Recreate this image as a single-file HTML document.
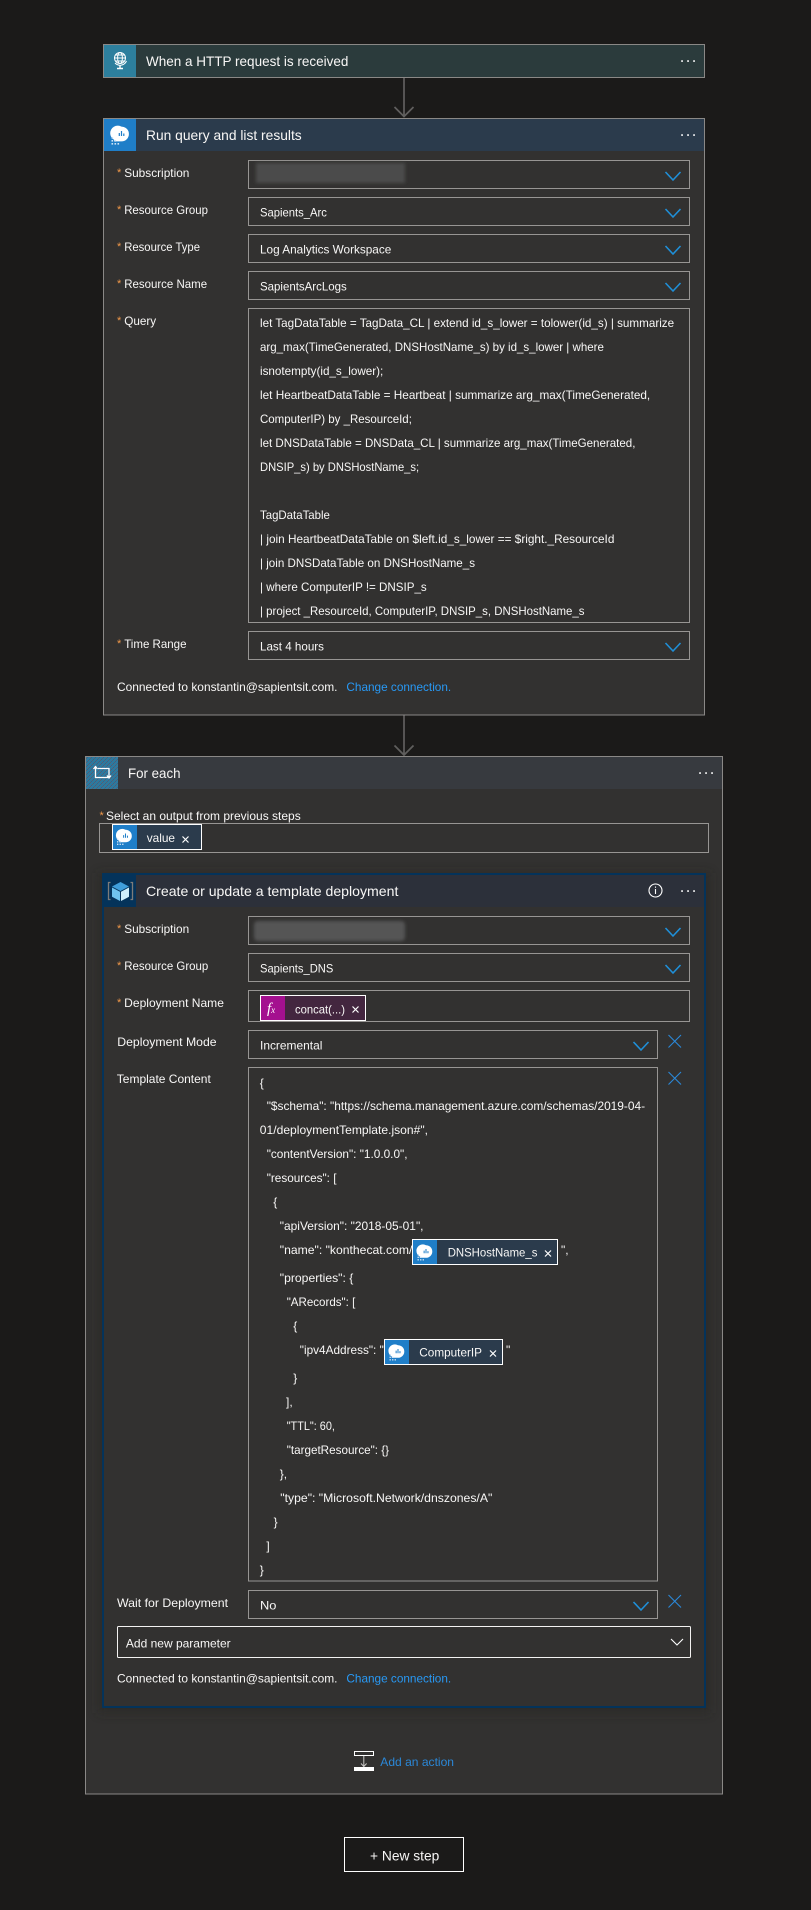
<!DOCTYPE html>
<html>
<head>
<meta charset="utf-8">
<title>Logic App</title>
<style>
html,body{margin:0;padding:0;background:#1b1a19;}
svg{display:block;}
text{font-family:"Liberation Sans",sans-serif;font-size:12px;fill:#f8f7f6;white-space:pre;}
.t{font-size:14px;}
.s{fill:#f2994a;font-size:11px;}
.l{fill:#2899f5;}
.in{fill:#323130;stroke:#979593;stroke-width:1;}
.c{fill:none;stroke:#1f8fd8;stroke-width:1.6;}
.x{stroke:#2b88d8;stroke-width:1.1;}
.w{stroke:#fff;stroke-width:1.2;}
</style>
</head>
<body>
<svg xmlns="http://www.w3.org/2000/svg" width="811" height="1910" viewBox="0 0 811 1910">
<defs>
<filter id="b" x="-10%" y="-30%" width="120%" height="160%"><feGaussianBlur stdDeviation="1.6"/></filter>
<filter id="sh" x="-5%" y="-5%" width="110%" height="110%"><feGaussianBlur stdDeviation="5"/></filter>
<pattern id="n" width="4" height="4" patternUnits="userSpaceOnUse">
<rect width="4" height="4" fill="#2d7a9e"/><rect width="1" height="1" fill="#5a5f6e"/><rect x="2" y="2" width="1" height="1" fill="#5a5f6e"/><rect x="3" y="1" width="1" height="1" fill="#3a5f8a"/><rect x="1" y="3" width="1" height="1" fill="#3a5f8a"/>
</pattern>
<g id="bub">
<path d="M0 -7.4a7.4 7.4 0 0 1 7.4 7.4a7.4 7.4 0 0 1 -7.4 7.4h-7.4v-1.6a7.4 7.4 0 0 1 7.4 -13.2z" fill="#fff"/>
<path d="M-2.8 -1v3h1.2v-3zM-.6 -3v5h1.2v-5zM1.7 -.5v2.5h1.2v-2.5z" fill="#1f7ec8"/>
<path d="M-10 3h1.6v1.6h-1.6zM-10 6h1.6v1.6h-1.6zM-7 6h1.6v1.6h-1.6zM-10 9h1.6v1.6h-1.6zM-7 9h1.6v1.6h-1.6zM-4 9h1.6v1.6h-1.6z" fill="#cfe4f6"/>
</g>
</defs>

<rect width="811" height="1910" fill="#1b1a19"/>

<!-- connectors -->
<path d="M404 78V116.500M394.500 107l9.500 9.500 9.500-9.500" fill="none" stroke="#605f5e" stroke-width="1.700"/>
<path d="M404 715V755M394.500 745.500l9.500 9.500 9.500-9.500" fill="none" stroke="#605f5e" stroke-width="1.700"/>

<!-- card 1 -->
<rect x="103.500" y="44.500" width="601" height="33" fill="#2b3b3c" stroke="#8a8886"/>
<rect x="104" y="45" width="32" height="32" fill="#2d7f9d"/>
<g fill="none" stroke="#fff" stroke-width="1">
<circle cx="120" cy="58" r="5.500"/><ellipse cx="120" cy="58" rx="2.400" ry="5.500"/><path d="M114.500 58h11M115.400 55h9.200M115.400 61h9.200"/>
<path d="M126.500 61a7 7 0 0 1-11.500 2"/><path d="M120 65v3M117 68.500h6" stroke-width="1.400"/>
</g>
<text class="t" x="146" y="66" textLength="202.400" lengthAdjust="spacingAndGlyphs">When a HTTP request is received</text>
<path d="M681.200 60.200h1.700v1.700h-1.700zM687.200 60.200h1.700v1.700h-1.700zM693.200 60.200h1.700v1.700h-1.700z" fill="#fff"/>

<!-- card 2 -->
<rect x="103.500" y="118.500" width="601" height="596.500" fill="#323130" stroke="#8a8886"/>
<rect x="104" y="119" width="600" height="32" fill="#2b3b4c"/>
<rect x="104" y="119" width="32" height="32" fill="#1f7ec8"/>
<use href="#bub" x="121.500" y="134"/>
<text class="t" x="146" y="140" textLength="155.700" lengthAdjust="spacingAndGlyphs">Run query and list results</text>
<path d="M681.200 134.200h1.700v1.700h-1.700zM687.200 134.200h1.700v1.700h-1.700zM693.200 134.200h1.700v1.700h-1.700z" fill="#fff"/>

<text class="s" x="117" y="176">*</text><text x="124.200" y="177" textLength="65.200" lengthAdjust="spacingAndGlyphs">Subscription</text>
<text class="s" x="117" y="213">*</text><text x="124.200" y="214" textLength="83.800" lengthAdjust="spacingAndGlyphs">Resource Group</text>
<text class="s" x="117" y="250">*</text><text x="124.200" y="251" textLength="75.800" lengthAdjust="spacingAndGlyphs">Resource Type</text>
<text class="s" x="117" y="287">*</text><text x="124.200" y="288" textLength="82.900" lengthAdjust="spacingAndGlyphs">Resource Name</text>
<text class="s" x="117" y="324">*</text><text x="124.200" y="325" textLength="32" lengthAdjust="spacingAndGlyphs">Query</text>
<text class="s" x="117" y="647">*</text><text x="124.200" y="648" textLength="62.300" lengthAdjust="spacingAndGlyphs">Time Range</text>

<rect class="in" x="248.500" y="160.500" width="441" height="28"/>
<rect x="256" y="163" width="149" height="20" fill="#4c4c4c" filter="url(#b)"/>
<path class="c" d="M665.500 172l7.500 8 7.500-8"/>
<rect class="in" x="248.500" y="197.500" width="441" height="28"/>
<text x="260" y="216.500" textLength="66.900" lengthAdjust="spacingAndGlyphs">Sapients_Arc</text>
<path class="c" d="M665.500 209l7.500 8 7.500-8"/>
<rect class="in" x="248.500" y="234.500" width="441" height="28"/>
<text x="260" y="253.500" textLength="131.300" lengthAdjust="spacingAndGlyphs">Log Analytics Workspace</text>
<path class="c" d="M665.500 246l7.500 8 7.500-8"/>
<rect class="in" x="248.500" y="271.500" width="441" height="28"/>
<text x="260" y="290.500" textLength="86.700" lengthAdjust="spacingAndGlyphs">SapientsArcLogs</text>
<path class="c" d="M665.500 283l7.500 8 7.500-8"/>

<rect class="in" x="248.500" y="308.500" width="441" height="314"/>
<text x="260" y="327" textLength="414.100" lengthAdjust="spacingAndGlyphs">let TagDataTable = TagData_CL | extend id_s_lower = tolower(id_s) | summarize</text>
<text x="260" y="351" textLength="343.900" lengthAdjust="spacingAndGlyphs">arg_max(TimeGenerated, DNSHostName_s) by id_s_lower | where</text>
<text x="260" y="375" textLength="123.300" lengthAdjust="spacingAndGlyphs">isnotempty(id_s_lower);</text>
<text x="260" y="399" textLength="390.200" lengthAdjust="spacingAndGlyphs">let HeartbeatDataTable = Heartbeat | summarize arg_max(TimeGenerated,</text>
<text x="260" y="423" textLength="151.900" lengthAdjust="spacingAndGlyphs">ComputerIP) by _ResourceId;</text>
<text x="260" y="447" textLength="375.400" lengthAdjust="spacingAndGlyphs">let DNSDataTable = DNSData_CL | summarize arg_max(TimeGenerated,</text>
<text x="260" y="471" textLength="159.100" lengthAdjust="spacingAndGlyphs">DNSIP_s) by DNSHostName_s;</text>
<text x="260" y="519" textLength="69.900" lengthAdjust="spacingAndGlyphs">TagDataTable</text>
<text x="260" y="543" textLength="354.400" lengthAdjust="spacingAndGlyphs">| join HeartbeatDataTable on $left.id_s_lower == $right._ResourceId</text>
<text x="260" y="567" textLength="215" lengthAdjust="spacingAndGlyphs">| join DNSDataTable on DNSHostName_s</text>
<text x="260" y="591" textLength="166.700" lengthAdjust="spacingAndGlyphs">| where ComputerIP != DNSIP_s</text>
<text x="260" y="615" textLength="324.500" lengthAdjust="spacingAndGlyphs">| project _ResourceId, ComputerIP, DNSIP_s, DNSHostName_s</text>

<rect class="in" x="248.500" y="631.500" width="441" height="28"/>
<text x="260" y="650.500" textLength="64" lengthAdjust="spacingAndGlyphs">Last 4 hours</text>
<path class="c" d="M665.500 643l7.500 8 7.500-8"/>

<text x="117" y="691" textLength="220.500" lengthAdjust="spacingAndGlyphs">Connected to konstantin@sapientsit.com.</text>
<text class="l" x="346.400" y="691" textLength="104.800" lengthAdjust="spacingAndGlyphs">Change connection.</text>

<!-- for each -->
<rect x="85.500" y="756.500" width="637" height="1037.500" fill="#323130" stroke="#8a8886"/>
<rect x="86" y="757" width="636" height="32" fill="#373a3f"/>
<rect x="86" y="757" width="32" height="32" fill="url(#n)"/>
<path d="M95.500 766v11.500H108M98 768.500h11V778M93.500 769l2-2.500 2 2.500M107 775.500l2 2.500 2-2.500" fill="none" stroke="#fff" stroke-width="1.300"/>
<text class="t" x="128" y="778" textLength="52.500" lengthAdjust="spacingAndGlyphs">For each</text>
<path d="M699.200 772.200h1.700v1.700h-1.700zM705.200 772.200h1.700v1.700h-1.700zM711.200 772.200h1.700v1.700h-1.700z" fill="#fff"/>

<text class="s" x="99.500" y="819">*</text>
<text x="106" y="820" textLength="194.700" lengthAdjust="spacingAndGlyphs">Select an output from previous steps</text>
<rect class="in" x="99.500" y="823.500" width="609" height="29"/>
<rect x="112.500" y="824.500" width="89" height="25" fill="#2b3b4c" stroke="#fff"/>
<rect x="113" y="825" width="24" height="24" fill="#1f7ec8"/>
<use href="#bub" transform="translate(125.500 836) scale(.85)"/>
<text x="146.700" y="842" textLength="28.300" lengthAdjust="spacingAndGlyphs">value</text>
<path class="w" d="M182.500 836.500l6 6M188.500 836.500l-6 6"/>

<!-- template card -->
<rect x="98" y="873" width="612" height="840" fill="#262524" opacity=".55" filter="url(#sh)"/>
<rect x="103" y="874" width="602" height="833" fill="#323130" stroke="#04335a" stroke-width="2"/>
<rect x="104" y="875" width="600" height="32" fill="#2c303a"/>
<rect x="102" y="873" width="34" height="34" fill="#04335a"/>
<path d="M110.500 882.500h-2v17h2M130.500 882.500h2v17h-2" fill="none" stroke="#7d7c7a" stroke-width="1.300"/>
<path d="M120.500 882l8.500 4.500-8.500 4.500-8.500-4.500z" fill="#3f9fdc"/>
<path d="M112 887.500l8 4.200V901l-8-4.200z" fill="#6fc3ef"/>
<path d="M129 887.500l-8 4.200V901l8-4.200z" fill="#cdeefb"/>
<text class="t" x="146" y="896" textLength="252.400" lengthAdjust="spacingAndGlyphs">Create or update a template deployment</text>
<circle cx="655.500" cy="890.500" r="6.500" fill="none" stroke="#fff" stroke-width="1.100"/>
<path d="M655.500 889v5M655.500 886.500v1.300" stroke="#fff" stroke-width="1.100"/>
<path d="M681.200 890.200h1.700v1.700h-1.700zM687.200 890.200h1.700v1.700h-1.700zM693.200 890.200h1.700v1.700h-1.700z" fill="#fff"/>

<text class="s" x="117" y="932">*</text><text x="124.200" y="933" textLength="65" lengthAdjust="spacingAndGlyphs">Subscription</text>
<rect class="in" x="248.500" y="916.500" width="441" height="28"/>
<rect x="254" y="921" width="151" height="20" rx="4" fill="#545454" filter="url(#b)"/>
<path class="c" d="M665.500 928l7.500 8 7.500-8"/>

<text class="s" x="117" y="969">*</text><text x="124.200" y="970" textLength="84.100" lengthAdjust="spacingAndGlyphs">Resource Group</text>
<rect class="in" x="248.500" y="953.500" width="441" height="28"/>
<text x="260" y="972.500" textLength="73.300" lengthAdjust="spacingAndGlyphs">Sapients_DNS</text>
<path class="c" d="M665.500 965l7.500 8 7.500-8"/>

<text class="s" x="117" y="1006">*</text><text x="124.200" y="1007" textLength="99.700" lengthAdjust="spacingAndGlyphs">Deployment Name</text>
<rect class="in" x="248.500" y="990.500" width="441" height="31"/>
<rect x="260.500" y="995.500" width="105" height="25" fill="#43263f" stroke="#fff"/>
<rect x="261" y="996" width="24" height="24" fill="#a4108f"/>
<text x="267" y="1013" style="font-family:'Liberation Serif',serif;font-style:italic;font-size:15px;fill:#fff">f<tspan font-size="9">x</tspan></text>
<text x="295" y="1013.300" textLength="50" lengthAdjust="spacingAndGlyphs">concat(...)</text>
<path class="w" d="M352.500 1006.500l6 6M358.500 1006.500l-6 6"/>

<text x="117.300" y="1046" textLength="99.300" lengthAdjust="spacingAndGlyphs">Deployment Mode</text>
<rect class="in" x="248.500" y="1030.500" width="409" height="28"/>
<text x="260" y="1049.500" textLength="62.400" lengthAdjust="spacingAndGlyphs">Incremental</text>
<path class="c" d="M633.500 1042l7.500 8 7.500-8"/>
<path class="x" d="M668.500 1035l12.500 12.500M681 1035l-12.500 12.500"/>

<text x="116.800" y="1083" textLength="94" lengthAdjust="spacingAndGlyphs">Template Content</text>
<rect class="in" x="248.500" y="1067.500" width="409" height="513.500"/>
<path class="x" d="M668.500 1072l12.500 12.500M681 1072l-12.500 12.500"/>

<text x="259.800" y="1087">{</text>
<text x="266.700" y="1110" textLength="378.400" lengthAdjust="spacingAndGlyphs">"$schema": "https://schema.management.azure.com/schemas/2019-04-</text>
<text x="259.800" y="1134" textLength="168.200" lengthAdjust="spacingAndGlyphs">01/deploymentTemplate.json#",</text>
<text x="266.700" y="1158" textLength="140.800" lengthAdjust="spacingAndGlyphs">"contentVersion": "1.0.0.0",</text>
<text x="266.700" y="1182" textLength="69.800" lengthAdjust="spacingAndGlyphs">"resources": [</text>
<text x="273.300" y="1206">{</text>
<text x="279.800" y="1230" textLength="143.700" lengthAdjust="spacingAndGlyphs">"apiVersion": "2018-05-01",</text>
<text x="279.800" y="1254" textLength="132.600" lengthAdjust="spacingAndGlyphs">"name": "konthecat.com/</text>
<rect x="412.500" y="1239.500" width="145" height="25" fill="#2b3b4c" stroke="#fff"/>
<rect x="413" y="1240" width="24" height="24" fill="#1f7ec8"/>
<use href="#bub" transform="translate(426 1251.500) scale(.85)"/>
<text x="447.700" y="1256.700" textLength="89.700" lengthAdjust="spacingAndGlyphs">DNSHostName_s</text>
<path class="w" d="M545 1250.500l6 6M551 1250.500l-6 6"/>
<text x="561" y="1254">",</text>
<text x="279.800" y="1282" textLength="73.500" lengthAdjust="spacingAndGlyphs">"properties": {</text>
<text x="286.700" y="1306" textLength="68.600" lengthAdjust="spacingAndGlyphs">"ARecords": [</text>
<text x="293.300" y="1330">{</text>
<text x="299.800" y="1354" textLength="84" lengthAdjust="spacingAndGlyphs">"ipv4Address": "</text>
<rect x="384.500" y="1339.500" width="118" height="25" fill="#2b3b4c" stroke="#fff"/>
<rect x="385" y="1340" width="24" height="24" fill="#1f7ec8"/>
<use href="#bub" transform="translate(398 1351.500) scale(.85)"/>
<text x="419.300" y="1356.700" textLength="62.700" lengthAdjust="spacingAndGlyphs">ComputerIP</text>
<path class="w" d="M490 1350.500l6 6M496 1350.500l-6 6"/>
<text x="506" y="1354">"</text>
<text x="293.300" y="1382">}</text>
<text x="286" y="1406">],</text>
<text x="286.700" y="1430" textLength="48.200" lengthAdjust="spacingAndGlyphs">"TTL": 60,</text>
<text x="286.700" y="1454" textLength="102.400" lengthAdjust="spacingAndGlyphs">"targetResource": {}</text>
<text x="279.800" y="1478">},</text>
<text x="280.300" y="1502" textLength="212" lengthAdjust="spacingAndGlyphs">"type": "Microsoft.Network/dnszones/A"</text>
<text x="273.600" y="1526">}</text>
<text x="266.400" y="1550">]</text>
<text x="259.700" y="1574">}</text>

<text x="117" y="1607" textLength="111" lengthAdjust="spacingAndGlyphs">Wait for Deployment</text>
<rect class="in" x="248.500" y="1590.500" width="409" height="28"/>
<text x="260" y="1609.500" textLength="16.400" lengthAdjust="spacingAndGlyphs">No</text>
<path class="c" d="M633.500 1602l7.500 8 7.500-8"/>
<path class="x" d="M668.500 1595l12.500 12.500M681 1595l-12.500 12.500"/>

<rect x="117.500" y="1626.500" width="573" height="31" fill="#323130" stroke="#f3f2f1" rx="1"/>
<text x="125.900" y="1647.500" textLength="104.800" lengthAdjust="spacingAndGlyphs">Add new parameter</text>
<path d="M671 1639l6 6 6-6" fill="none" stroke="#fff" stroke-width="1.100"/>

<text x="117" y="1682.300" textLength="220.500" lengthAdjust="spacingAndGlyphs">Connected to konstantin@sapientsit.com.</text>
<text class="l" x="346.400" y="1682.300" textLength="104.800" lengthAdjust="spacingAndGlyphs">Change connection.</text>

<rect x="354.500" y="1751.500" width="19" height="4" fill="none" stroke="#fff"/>
<rect x="354" y="1767" width="20" height="4" fill="#fff"/>
<path d="M363.800 1756v11M361 1763.500l2.800 3 2.800-3" fill="none" stroke="#c8c6c4" stroke-width="1"/>
<text x="380.300" y="1766" textLength="73.700" lengthAdjust="spacingAndGlyphs" style="fill:#2b88d8">Add an action</text>

<!-- new step -->
<rect x="344.500" y="1837.500" width="119" height="34" fill="#1b1a19" stroke="#fff"/>
<text class="t" x="370" y="1860.500" textLength="69.300" lengthAdjust="spacingAndGlyphs">+ New step</text>
</svg>
</body>
</html>
